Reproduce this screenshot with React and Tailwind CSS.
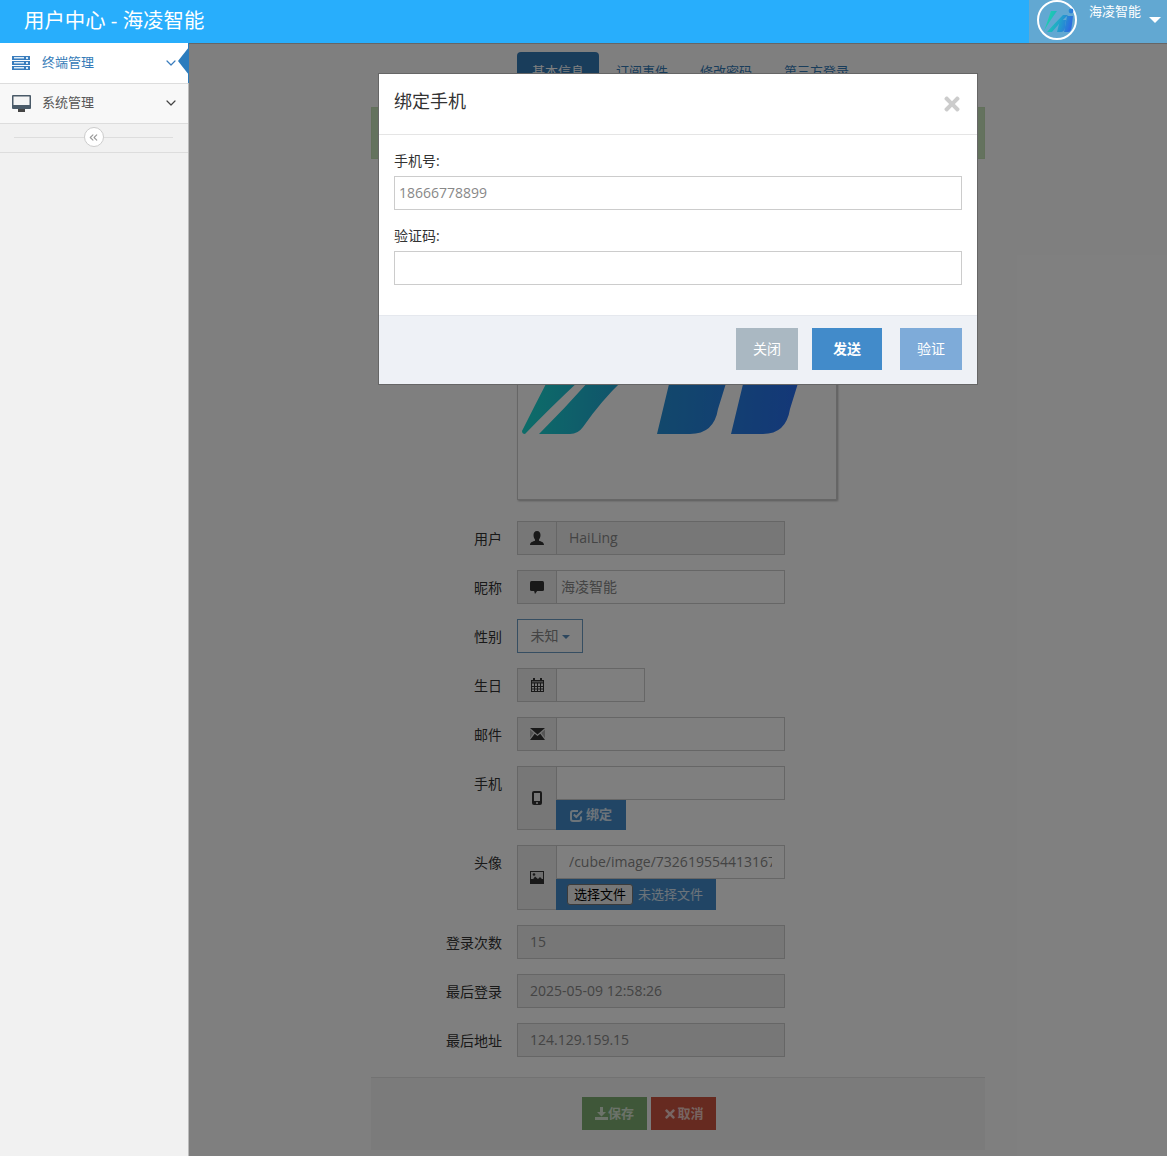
import { ChevronDown, ChevronsLeft } from "lucide-react";
import { FaTimes } from "react-icons/fa";

const font = { fontFamily: '"Open Sans", "Noto Sans CJK SC", sans-serif' };

const ServerIcon = () => (
  <svg className="block" width="18" height="14" viewBox="0 0 18 14" fill="#3a7dbd">
    <rect x="0" y="0" width="18" height="4" />
    <rect x="0" y="5" width="18" height="4" />
    <rect x="0" y="10" width="18" height="4" />
    <rect x="2" y="1" width="10" height="1.500" fill="#dcebf7" />
    <rect x="2" y="6" width="10" height="1.500" fill="#dcebf7" />
    <rect x="2" y="11" width="10" height="1.500" fill="#dcebf7" />
    <rect x="14" y="1" width="2" height="2" fill="#dcebf7" />
    <rect x="14" y="6" width="2" height="2" fill="#dcebf7" />
    <rect x="14" y="11" width="2" height="2" fill="#dcebf7" />
  </svg>
);

const MonitorIcon = () => (
  <svg className="block" width="19" height="17" viewBox="0 0 19 17">
    <rect x="0" y="0" width="19" height="14" rx="1" fill="#4a5a68" />
    <rect x="1.500" y="1.500" width="16" height="8.500" fill="#f4f4f4" />
    <rect x="6" y="14" width="7" height="3" fill="#444" />
  </svg>
);

const UserIcon = () => (
  <svg className="block" width="14" height="14" viewBox="0 0 14 14" fill="currentColor">
    <path d="M7 0c2.400 0 3.500 1.800 3.500 4 0 2-.8 3.500-1.500 4.500v1.200c2 .6 5 1.500 5 4.300H0c0-2.800 3-3.700 5-4.300V8.500C4.300 7.500 3.500 6 3.500 4 3.500 1.800 4.600 0 7 0z" />
  </svg>
);

const CommentIcon = () => (
  <svg className="block" width="14" height="13" viewBox="0 0 14 13" fill="currentColor">
    <rect x="0" y="0" width="14" height="10" rx="1.500" />
    <path d="M4 9.500h3.500L5 13z" />
  </svg>
);

const CalendarIcon = () => (
  <svg className="block" width="13" height="14" viewBox="0 0 13 14" fill="none" stroke="currentColor">
    <rect x="0.500" y="2.500" width="12" height="11" />
    <path d="M0 4h13M0 5h13M0 8.500h13M0 11h13M3.500 5v9M6.500 5v9M9.500 5v9" />
    <path d="M3 0v3M10 0v3" strokeWidth="2" />
  </svg>
);

const MailIcon = () => (
  <svg className="block" width="15" height="12" viewBox="0 0 15 12" fill="currentColor">
    <path d="M0 0h15L7.500 6.500z" />
    <path d="M0 12h15L10.300 5.800 7.500 8 4.700 5.800z" />
    <path d="M0 1.500L3.800 5 0 10z" opacity="0.35" />
    <path d="M15 1.500L11.200 5 15 10z" opacity="0.35" />
  </svg>
);

const PhoneIcon = () => (
  <svg className="block" width="10" height="14" viewBox="0 0 10 14">
    <rect x="0" y="0" width="10" height="14" rx="2" fill="#333" />
    <rect x="2" y="2" width="6" height="8" fill="#eee" />
    <circle cx="5" cy="12" r="1" fill="#eee" />
  </svg>
);

const ImageIcon = () => (
  <svg className="block" width="14" height="13" viewBox="0 0 14 13">
    <rect x="0" y="0" width="14" height="13" fill="#333" />
    <rect x="1" y="1" width="12" height="7" fill="#ddd" />
    <path d="M1 11L5 5.500 8 8l2-2 3 3v3H1z" fill="#333" />
    <circle cx="4" cy="3.500" r="1.300" fill="#333" />
  </svg>
);

const CheckIcon = () => (
  <svg className="block" width="13" height="13" viewBox="0 0 13 13" fill="none" stroke="currentColor" strokeWidth="2">
    <path d="M11 7.500V10a2 2 0 0 1-2 2H3a2 2 0 0 1-2-2V4a2 2 0 0 1 2-2h5" />
    <path d="M3.800 5.500l2.500 2.500L12 2" />
  </svg>
);

const SaveIcon = () => (
  <svg className="block" width="13" height="13" viewBox="0 0 13 13" fill="currentColor">
    <path d="M5 0h3v5h3L6.500 9.500 2 5h3z" />
    <rect x="0" y="10" width="13" height="3" />
  </svg>
);

const LogoBig = () => (
  <svg className="block" width="318" height="318" viewBox="518 181 318 318">
    <defs>
      <linearGradient id="bigLogo" gradientUnits="userSpaceOnUse" x1="520" y1="400" x2="800" y2="420">
        <stop offset="0" stopColor="#1adcd2" />
        <stop offset="0.5" stopColor="#2490d8" />
        <stop offset="1" stopColor="#286ef0" />
      </linearGradient>
    </defs>
    <g fill="url(#bigLogo)">
      <path d="M522 431q0 3 3 3Q550 408 580 380h-32Q535 405 522 431z" />
      <path d="M539 434h31q8 0 13-7 18-26 40-47h-33Q565 408 539 434z" />
      <path d="M657 434h33q24 0 28-25l9-29h-57z" />
      <path d="M731 434h32q23 0 27-25l9-29h-55z" />
    </g>
  </svg>
);

const LogoSmall = () => (
  <svg width="36" height="36" viewBox="0 0 36 36">
    <defs>
      <linearGradient id="smallLogo" gradientUnits="userSpaceOnUse" x1="6" y1="16" x2="32" y2="24">
        <stop offset="0" stopColor="#1cd8a8" />
        <stop offset="0.5" stopColor="#20a8c8" />
        <stop offset="1" stopColor="#2c6ce0" />
      </linearGradient>
    </defs>
    <g fill="url(#smallLogo)">
      <path d="M5 29Q9 18 12 9h6Q10 20 5 29z" />
      <path d="M8 30h5Q20 21 29 13h-5Q16 21 8 30z" />
      <path d="M18 30h4q3 0 4-4l1-8h-6z" />
      <path d="M25 30h4q3 0 3.500-4L34 14h-6z" />
      <circle cx="32" cy="9" r="2.400" />
    </g>
  </svg>
);

const Addon = ({ icon, className = "" }) => (
  <div className={`flex w-10 shrink-0 items-center justify-center border border-[#ccc] bg-[#eee] text-[#333] ${className}`}>
    {icon}
  </div>
);

const TextBox = ({ children, className = "" }) => (
  <div className={`h-[34px] border border-[#ccc] text-sm leading-[32px] text-[#888] ${className}`}>
    <div className="overflow-hidden whitespace-nowrap">{children}</div>
  </div>
);

const Row = ({ label, children, className = "h-[34px]" }) => (
  <div className={`mb-[15px] flex ${className}`}>
    <div className="mr-[15px] h-[34px] w-[131px] shrink-0 text-right text-sm leading-[35px] text-[#333]">{label}</div>
    {children}
  </div>
);

const InputRow = ({ label, icon, value, disabled, width = "w-[268px]", pad = "pl-[4px]" }) => (
  <Row label={label}>
    <div className={`flex ${width}`}>
      <Addon icon={icon} />
      <TextBox className={`-ml-px flex-1 ${pad} ${disabled ? "bg-[#eee]" : "bg-white"}`}>{value}</TextBox>
    </div>
  </Row>
);

const ReadRow = ({ label, value }) => (
  <Row label={label}>
    <TextBox className="w-[268px] bg-[#eee] pl-[12px]">{value}</TextBox>
  </Row>
);

const SideItem = ({ icon, label, active, className = "h-10" }) => (
  <div className={`relative flex items-center border-b border-[#ddd] pl-3 pr-[9px] ${className} ${active ? "bg-white text-[#337ab7]" : "bg-[#f8f8f8] text-[#555]"}`}>
    <div className="w-[30px] shrink-0">{icon}</div>
    <span className="flex-1 text-[13px]">{label}</span>
    <ChevronDown size={16} strokeWidth={1.8} className={active ? "text-[#3a7dbd]" : "text-[#444]"} />
    {active && (
      <svg className="absolute right-[-1px] top-0" width="11" height="40" viewBox="0 0 11 40" fill="#2c7cbd">
        <path d="M11 4L0 18 11 32z" />
        <rect x="10" y="0" width="1" height="40" />
      </svg>
    )}
  </div>
);

const Modal = () => (
  <div className="absolute left-[189px] top-[29px] z-20 flex h-[312px] w-[600px] flex-col border border-[#666] bg-white">
    <div className="flex h-[61px] shrink-0 items-center justify-between border-b border-[#e5e5e5] pl-[15px] pr-[14px]">
      <span className="mb-[6px] text-lg text-[#333]">绑定手机</span>
      <FaTimes size={22} className="text-[#ccc]" />
    </div>
    <div className="flex-1 px-[15px] pt-[16px]">
      <div className="h-5 text-sm leading-5 text-[#333]">手机号:</div>
      <div className="mt-[5px] h-[34px] border border-[#ccc] pl-[4px] text-sm leading-[32px] text-[#888]">18666778899</div>
      <div className="mt-[16px] h-5 text-sm leading-5 text-[#333]">验证码:</div>
      <div className="mt-[5px] h-[34px] border border-[#ccc]" />
    </div>
    <div className="flex h-[69px] shrink-0 justify-end border-t border-[#e5e8ee] bg-[#eef1f6] pr-[15px] pt-[12px]">
      <button type="button" className="h-[42px] w-[62px] bg-[#aab8c2] text-sm text-white">关闭</button>
      <button type="button" className="ml-[14px] h-[42px] w-[70px] bg-[#428bca] text-sm font-bold text-white">发送</button>
      <button type="button" className="ml-[18px] h-[42px] w-[62px] bg-[#7eabd9] text-sm text-white">验证</button>
    </div>
  </div>
);

const App = () => {
  return (
    <div className="flex h-[1156px] flex-col overflow-hidden bg-white" style={font}>
      <header className="flex h-[43px] shrink-0 items-start justify-between bg-[#28aefc] text-white">
        <div className="pl-[24px] text-[20.4px] leading-[41px]">用户中心 - 海凌智能</div>
        <div className="flex h-[43px] w-[138px] bg-[#62a8d2] pl-2">
          <div className="flex h-10 w-10 shrink-0 items-center justify-center rounded-full border-2 border-white">
            <LogoSmall />
          </div>
          <span className="ml-3 mt-[2px] text-[13px] leading-[18px]">海凌智能</span>
          <div className="ml-2 mt-[17px] h-0 w-0 border-x-[6px] border-t-[6px] border-x-transparent border-t-white" />
        </div>
      </header>

      <div className="flex min-h-0 flex-1">
        <aside className="w-[189px] shrink-0 border-r border-[#bbb] bg-[#f1f1f1]">
          <SideItem icon={<ServerIcon />} label="终端管理" active className="h-[41px] pb-[1px]" />
          <SideItem icon={<MonitorIcon />} label="系统管理" className="h-10 pb-[1px]" />
          <div className="flex h-[29px] items-center border-b border-[#ddd] pb-[2px] pl-[14px] pr-[15px]">
            <div className="h-px flex-1 bg-[#ddd]" />
            <div className="flex h-5 w-5 items-center justify-center rounded-full border border-[#ccc] bg-white text-[#999]">
              <ChevronsLeft size={13} />
            </div>
            <div className="h-px flex-1 bg-[#ddd]" />
          </div>
        </aside>

        <main className="relative flex-1 overflow-hidden border-t border-[#666]">
          <div className="mx-auto w-[614px] pt-2">
            <nav className="ml-[146px] flex h-[42px] gap-[2px] text-[13px] leading-[38px] text-[#337ab7]">
              <span className="rounded-t-[4px] bg-[#337ab7] px-[15px] text-white">基本信息</span>
              <span className="px-[15px]">订阅事件</span>
              <span className="px-[15px]">修改密码</span>
              <span className="px-[15px]">第三方登录</span>
            </nav>
            <div className="mt-[13px] h-[52px] border border-[#c4e0b4] bg-[#c8e4bc]" />
            <div className="ml-[146px] mt-[21px] h-[320px] w-[320px] border border-[#ccc] shadow-[1px_1px_2px_rgba(0,0,0,0.3)]">
              <LogoBig />
            </div>

            <div className="mt-[21px]">
              <InputRow label="用户" icon={<UserIcon />} value="HaiLing" disabled pad="pl-[12px]" />
              <InputRow label="昵称" icon={<CommentIcon />} value="海凌智能" />
              <Row label="性别">
                <button type="button" className="h-[34px] w-[66px] border border-[#6c9cc4] text-sm text-[#888]">
                  未知
                  <span className="ml-[3px] inline-block h-0 w-0 border-x-[4px] border-t-[4px] border-x-transparent border-t-[#5b8fbd] align-middle" />
                </button>
              </Row>
              <InputRow label="生日" icon={<CalendarIcon />} width="w-[128px]" />
              <InputRow label="邮件" icon={<MailIcon />} />
              <Row label="手机" className="h-[64px]">
                <div className="flex w-[268px]">
                  <Addon icon={<PhoneIcon />} />
                  <div className="-ml-px flex-1">
                    <TextBox />
                    <button type="button" className="flex h-[30px] w-[70px] items-center justify-center gap-[3px] bg-[#428bca] text-[13px] font-bold text-white/80">
                      <CheckIcon />
                      绑定
                    </button>
                  </div>
                </div>
              </Row>
              <Row label="头像" className="h-[65px]">
                <div className="flex w-[268px]">
                  <Addon icon={<ImageIcon />} />
                  <div className="-ml-px min-w-0 flex-1">
                    <TextBox className="pl-[12px] pr-[12px]">/cube/image/732619554413167</TextBox>
                    <div className="flex h-[31px] w-[160px] items-center bg-[#428bca] pl-[11px] text-[13px]">
                      <span className="flex h-[21px] w-[66px] items-center justify-center rounded-[3px] border border-[#767676] bg-[#efefef] text-black">选择文件</span>
                      <span className="ml-[5px] text-white/80">未选择文件</span>
                    </div>
                  </div>
                </div>
              </Row>
              <ReadRow label="登录次数" value="15" />
              <ReadRow label="最后登录" value="2025-05-09 12:58:26" />
              <ReadRow label="最后地址" value="124.129.159.15" />
            </div>

            <div className="mt-[20px] flex h-[73px] gap-1 border-t border-[#e5e5e5] bg-[#f6f6f6] pl-[211px] pt-[19px]">
              <button type="button" className="flex h-[33px] w-[65px] items-center justify-center bg-[#7fae72] text-[13px] font-bold text-white/70">
                <SaveIcon />
                保存
              </button>
              <button type="button" className="flex h-[33px] w-[65px] items-center justify-center bg-[#cc5440] text-[13px] font-bold text-white/70">
                <FaTimes size={14} />
                取消
              </button>
            </div>
          </div>

          <div className="absolute inset-0 z-10 bg-black/50" />
          <Modal />
        </main>
      </div>
    </div>
  );
};

export default App;
